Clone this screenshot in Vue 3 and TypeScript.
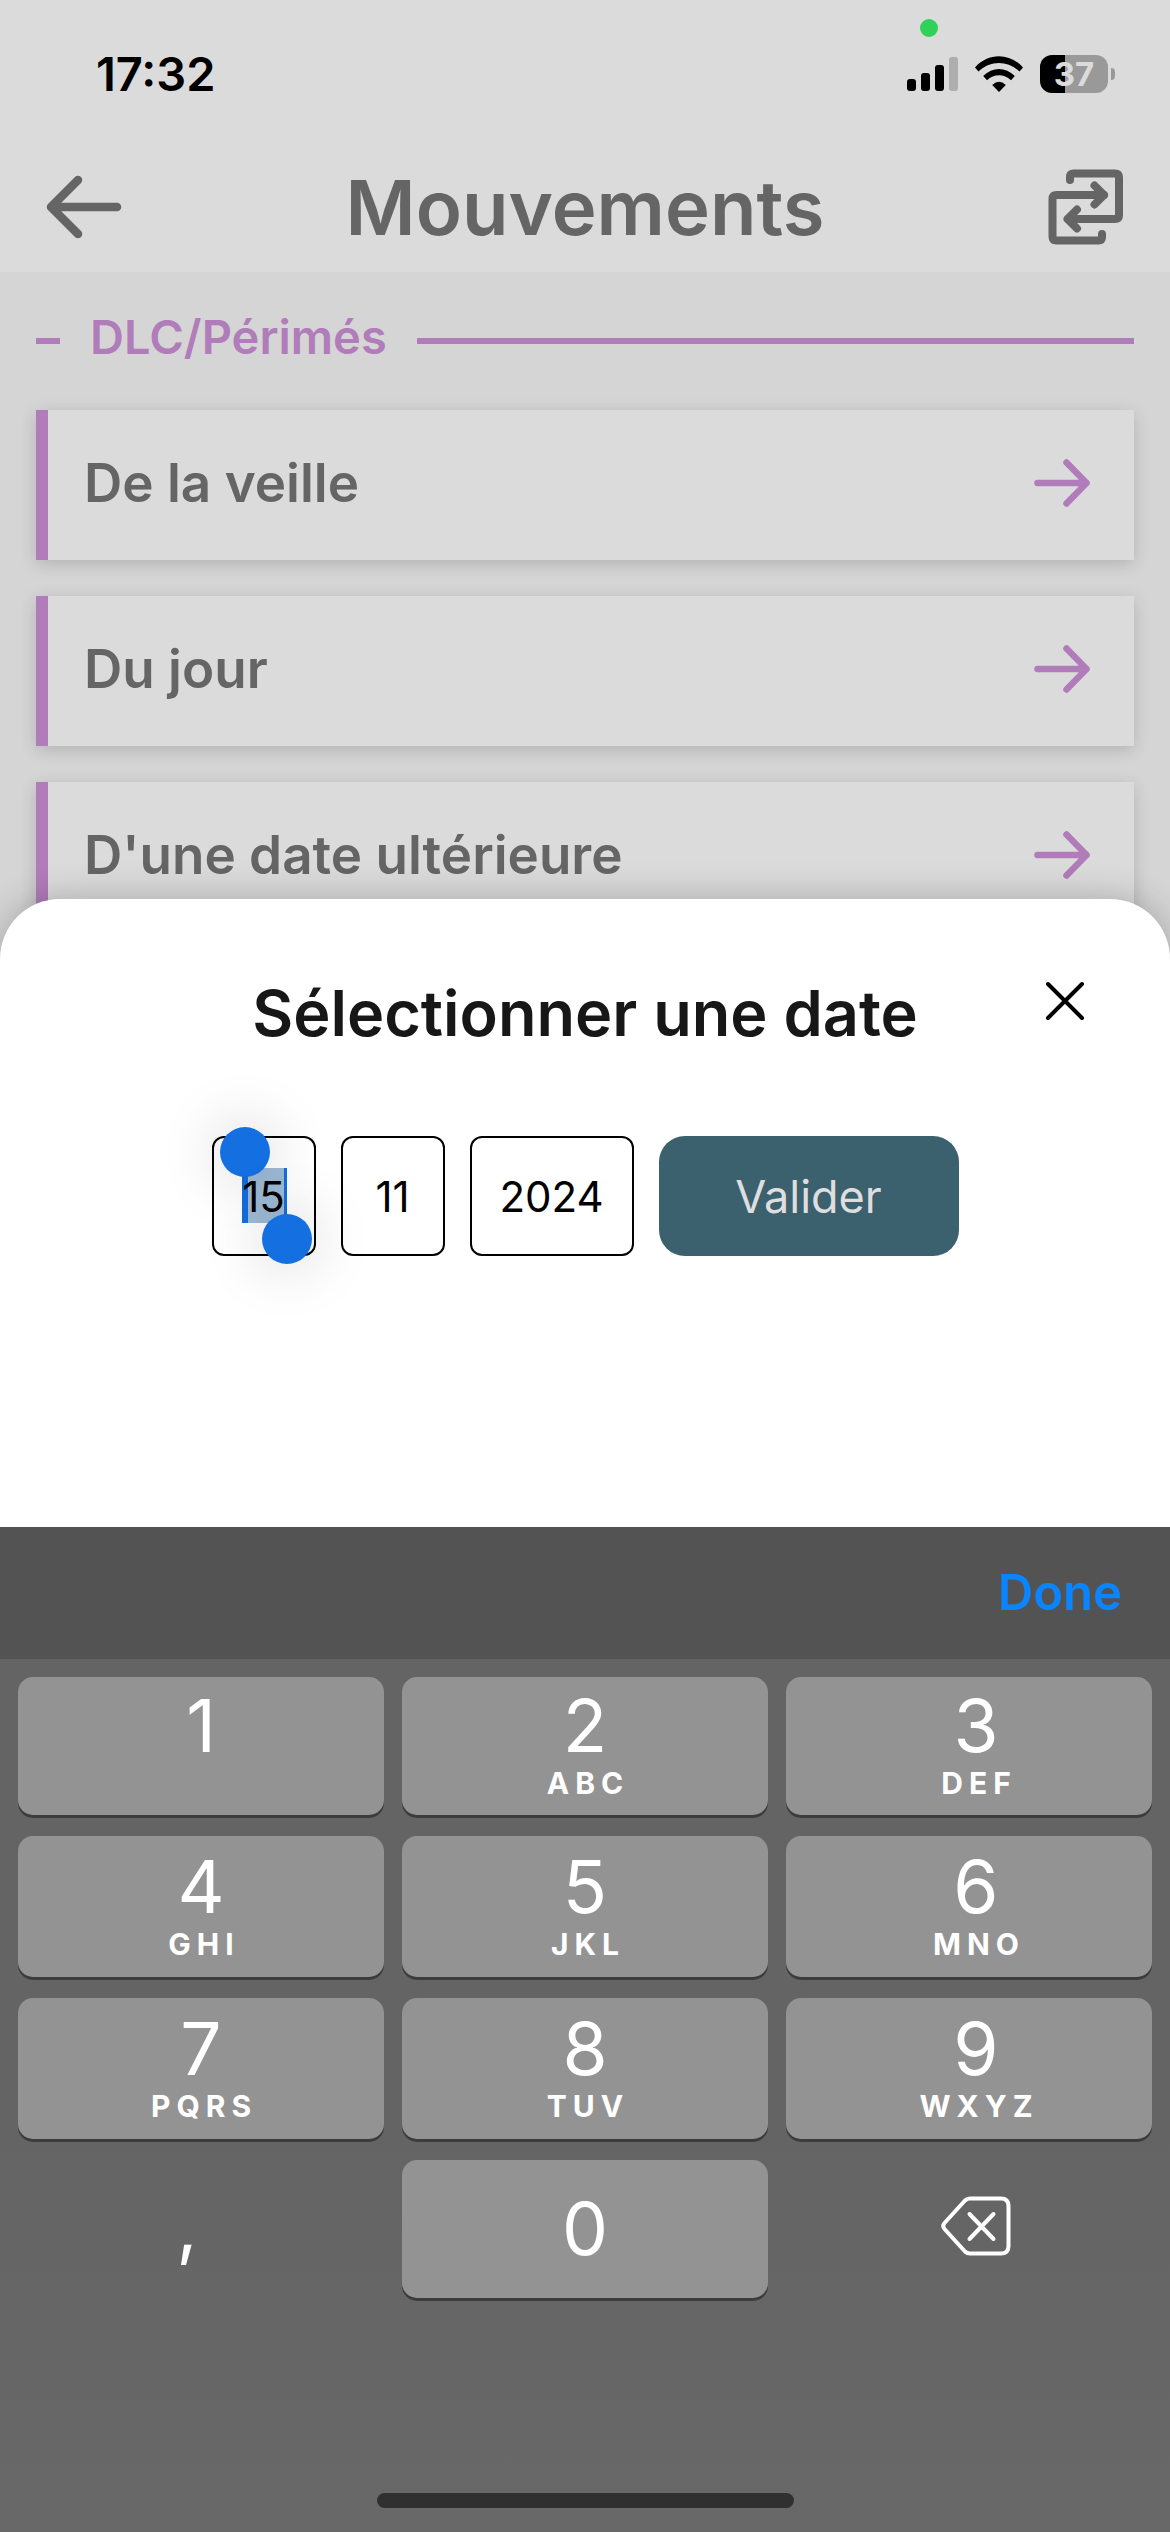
<script setup lang="ts">
import { ref } from 'vue'

interface Key {
  digit: string
  letters: string
}

const links: string[] = ['De la veille', 'Du jour', "D'une date ultérieure"]

const keys: Key[] = [
  { digit: '1', letters: '' },
  { digit: '2', letters: 'ABC' },
  { digit: '3', letters: 'DEF' },
  { digit: '4', letters: 'GHI' },
  { digit: '5', letters: 'JKL' },
  { digit: '6', letters: 'MNO' },
  { digit: '7', letters: 'PQRS' },
  { digit: '8', letters: 'TUV' },
  { digit: '9', letters: 'WXYZ' },
]

const day = ref('15')
const month = ref('11')
const year = ref('2024')
</script>

<template>
  <div class="screen">
    <div class="top">
      <div class="status">
        <span class="camera-dot"></span>
        <time class="clock">17:32</time>
        <div class="indicators">
          <svg width="51" height="34" viewBox="0 0 51 34" aria-hidden="true">
            <rect x="0" y="22" width="9" height="12" rx="3" />
            <rect x="14" y="16" width="9" height="18" rx="3" />
            <rect x="28" y="8" width="9" height="26" rx="3" />
            <rect x="42" y="0" width="9" height="34" rx="3" fill="#aeaeae" />
          </svg>
          <svg width="48" height="36" viewBox="0 0 48 36" aria-hidden="true">
            <path d="M0 11.500C13-3.500 35-3.500 48 11.500L44.500 15.500C32.500 4.300 15.500 4.300 3.500 15.500Z" />
            <path d="M8.200 20C17.500 10.500 30.500 10.500 39.800 20L36 24.300C29 17.500 19 17.500 12 24.300Z" />
            <path d="M17.200 29Q24 22.600 30.800 29L24 36Z" />
          </svg>
          <div class="battery">
            <span class="battery-body">37</span>
            <span class="battery-tip"></span>
          </div>
        </div>
      </div>
      <header class="header">
        <button class="icon-button" type="button" aria-label="Retour">
          <svg width="76" height="64" viewBox="0 0 76 64" fill="none" stroke="#656565" stroke-width="8.500" stroke-linecap="round" stroke-linejoin="round">
            <path d="M71 32H5M32 5L5 32L32 59" />
          </svg>
        </button>
        <h1>Mouvements</h1>
        <button class="icon-button" type="button" aria-label="Échanger">
          <svg width="76" height="76" viewBox="0 0 76 76" fill="none" stroke="#656565" stroke-width="8" stroke-linecap="round" stroke-linejoin="round">
            <path d="M22 11V8Q22 4.500 25.500 4.500H67Q71 4.500 71 8.500V46Q71 50 67 50H20" />
            <path d="M54 65V68Q54 71.500 50.500 71.500H8.500Q4.500 71.500 4.500 67.500V30Q4.500 26 8.500 26H56" />
            <path d="M46.500 16.500L56 26L46.500 35.500M29 40.500L19.500 50L29 59.500" />
          </svg>
        </button>
      </header>
    </div>

    <main class="content">
      <h2 class="section">DLC/Périmés</h2>
      <button v-for="label in links" :key="label" class="card" type="button">
        <span>{{ label }}</span>
        <svg width="56" height="50" viewBox="0 0 56 50" fill="none" stroke="#b07cb9" stroke-width="6.500" stroke-linecap="round" stroke-linejoin="round">
          <path d="M3.500 25H52.500M32.500 4.500L52.500 25L32.500 45.500" />
        </svg>
      </button>
    </main>

    <div class="dock">
      <section class="sheet">
        <h2 class="sheet-title">Sélectionner une date</h2>
        <button class="close" type="button" aria-label="Fermer">
          <svg width="40" height="40" viewBox="0 0 40 40" fill="none" stroke="#000" stroke-width="4" stroke-linecap="round">
            <path d="M3 3L37 37M37 3L3 37" />
          </svg>
        </button>
        <form class="date-form" @submit.prevent>
          <div class="field">
            <span class="selection"></span>
            <input v-model="day" type="text" inputmode="numeric" aria-label="Jour" />
            <span class="handle handle-start"></span>
            <span class="handle handle-end"></span>
          </div>
          <div class="field">
            <input v-model="month" type="text" inputmode="numeric" aria-label="Mois" />
          </div>
          <div class="field field-year">
            <input v-model="year" type="text" inputmode="numeric" aria-label="Année" />
          </div>
          <button class="submit" type="submit">Valider</button>
        </form>
      </section>

      <section class="keyboard">
        <div class="accessory">
          <button class="done" type="button">Done</button>
        </div>
        <div class="keys">
          <button v-for="key in keys" :key="key.digit" class="key" type="button">
            <span class="digit">{{ key.digit }}</span>
            <span class="letters">{{ key.letters }}</span>
          </button>
          <button class="key plain comma" type="button"><span class="digit">,</span></button>
          <button class="key" type="button"><span class="digit">0</span></button>
          <button class="key plain" type="button" aria-label="Effacer">
            <svg width="70" height="60" viewBox="0 0 70 60" fill="none" stroke="#fff" stroke-width="4" stroke-linecap="round" stroke-linejoin="round">
              <path d="M29 2.500H60Q67.500 2.500 67.500 10V50Q67.500 57.500 60 57.500H29Q26 57.500 24 55.500L3.500 33Q1 30 3.500 27L24 4.500Q26 2.500 29 2.500Z" />
              <path d="M28.500 18L52.500 43M52.500 18L28.500 43" />
            </svg>
          </button>
        </div>
        <div class="home"></div>
      </section>
    </div>
  </div>
</template>

<style>
body {
  margin: 0;
}
</style>

<style scoped>
* {
  box-sizing: border-box;
}

.screen {
  position: relative;
  min-height: 100vh;
  overflow: hidden;
  background: #d5d5d5;
  font-family: Inter, "Liberation Sans", sans-serif;
}

button {
  border: 0;
  padding: 0;
  background: none;
  font-family: inherit;
}

svg {
  display: block;
  flex: none;
}

h1,
h2 {
  margin: 0;
  font-weight: 600;
}

.top {
  background: #dbdbdb;
}

.status {
  position: relative;
  display: flex;
  align-items: center;
  justify-content: space-between;
  height: 148px;
  padding: 0 55px 0 96px;
}

.camera-dot {
  position: absolute;
  top: 19px;
  right: 232px;
  width: 18px;
  height: 18px;
  border-radius: 50%;
  background: #30d158;
}

.clock {
  font-size: 47px;
  font-weight: 600;
  line-height: 56px;
}

.indicators {
  display: flex;
  align-items: center;
  gap: 17px;
}

.battery {
  display: flex;
  align-items: center;
  gap: 3px;
}

.battery-body {
  width: 68px;
  border-radius: 12px;
  background: linear-gradient(90deg, #000 25px, #999 25px);
  color: #dbdbdb;
  font-size: 33px;
  font-weight: 700;
  line-height: 38px;
  text-align: center;
}

.battery-tip {
  width: 4px;
  height: 12px;
  border-radius: 0 4px 4px 0;
  background: #999;
}

.header {
  display: flex;
  align-items: center;
  justify-content: space-between;
  height: 124px;
  padding: 0 46px 6px;
  color: #656565;
}

.header h1 {
  font-size: 76px;
  line-height: 90px;
}

.content {
  display: flex;
  flex-direction: column;
  gap: 36px;
  padding: 32px 36px 36px;
}

.section {
  display: flex;
  align-items: center;
  gap: 30px;
  padding-bottom: 4px;
  color: #b07cb9;
  font-size: 47px;
  line-height: 66px;
}

/* The rules run slightly below the middle of the caption */
.section::before,
.section::after {
  content: "";
  width: 24px;
  height: 6px;
  margin-top: 8px;
  background: #b07cb9;
}

.section::after {
  flex: 1;
}

.card {
  display: flex;
  align-items: center;
  justify-content: space-between;
  height: 150px;
  padding: 0 44px 4px 36px;
  border-left: 12px solid #b07cb9;
  background: #dbdbdb;
  box-shadow: 0 4px 16px rgba(0, 0, 0, 0.16);
  color: #656565;
  font-size: 53px;
  font-weight: 600;
  line-height: 60px;
}

.dock {
  position: absolute;
  right: 0;
  bottom: 0;
  left: 0;
}

.sheet {
  position: relative;
  height: 628px;
  padding: 78px 46px 0;
  border-radius: 60px 60px 0 0;
  background: #fff;
  box-shadow: 0 0 36px rgba(0, 0, 0, 0.24);
}

.sheet-title {
  color: #171717;
  font-size: 63px;
  line-height: 72px;
  text-align: center;
}

.close {
  position: absolute;
  top: 82px;
  right: 85px;
}

.date-form {
  display: flex;
  justify-content: center;
  gap: 25px;
  margin-top: 87px;
}

.field {
  position: relative;
  width: 104px;
  height: 120px;
}

.field-year {
  width: 164px;
}

.field input {
  position: relative;
  width: 100%;
  height: 100%;
  padding: 0;
  border: 2px solid #000;
  border-radius: 12px;
  outline: 0;
  background: transparent;
  color: #000;
  font-family: inherit;
  font-size: 42px;
  text-align: center;
}

.selection {
  position: absolute;
  top: 32px;
  left: 30px;
  width: 45px;
  height: 55px;
  border-right: 3px solid #146fe1;
  border-left: 6px solid #146fe1;
  background: #9fbbd7;
}

.handle {
  position: absolute;
  width: 50px;
  height: 50px;
  border-radius: 50%;
  background: #146fe1;
  box-shadow: 0 0 60px rgba(0, 0, 0, 0.22);
}

.handle-start {
  top: -9px;
  left: 8px;
}

.handle-end {
  top: 78px;
  left: 50px;
}

.submit {
  width: 300px;
  height: 120px;
  border-radius: 26px;
  background: #3b606e;
  color: #dedede;
  font-size: 45px;
}

/* Positioned so that it covers the lower edge of the sheet's shadow */
.keyboard {
  position: relative;
  padding-bottom: 24px;
  background: linear-gradient(#646464 60%, #686868);
}

.accessory {
  display: flex;
  align-items: center;
  justify-content: flex-end;
  height: 132px;
  padding: 0 48px;
  background: #535353;
}

.done {
  color: #0a84ff;
  font-size: 49px;
  font-weight: 600;
  line-height: 60px;
}

.keys {
  display: grid;
  grid-template-columns: repeat(3, 1fr);
  grid-template-rows: 138px 141px 141px 138px;
  gap: 21px 18px;
  padding: 18px 18px 195px;
}

.key {
  display: flex;
  flex-direction: column;
  align-items: center;
  justify-content: center;
  border-radius: 15px;
  background: #939393;
  box-shadow: 0 3px 0 #3c3c3c;
  color: #fff;
}

.key:nth-child(3n) {
  padding-left: 14px;
}

.plain {
  padding-bottom: 6px;
  background: none;
  box-shadow: none;
}

.comma {
  padding-right: 28px;
}

.digit {
  font-size: 73px;
  line-height: 74px;
}

.letters {
  height: 40px;
  padding-left: 6px;
  font-size: 30px;
  font-weight: 700;
  line-height: 40px;
  letter-spacing: 6px;
}

.home {
  width: 417px;
  height: 15px;
  margin: 0 auto;
  border-radius: 8px;
  background: #303030;
}
</style>
